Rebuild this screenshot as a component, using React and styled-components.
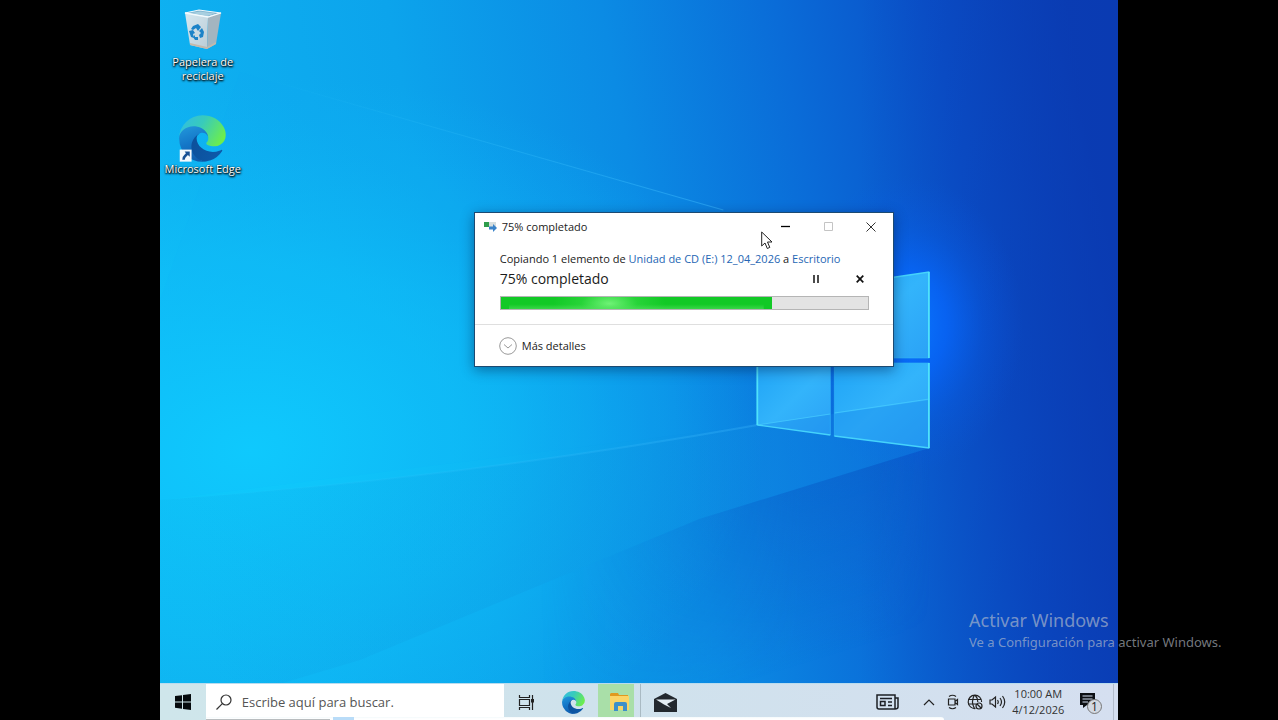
import React from "react";
import styled, { createGlobalStyle } from "styled-components";

const GlobalStyle = createGlobalStyle`
  *, *::before, *::after { box-sizing: border-box; }
  html, body, #root { height: 100%; }
  body {
    margin: 0;
    background: #000;
    overflow: hidden;
    font-family: "Open Sans", "Noto Sans", sans-serif;
    font-size: 11px;
    line-height: 14px;
    color: #1b1b1b;
  }
  button { font: inherit; color: inherit; padding: 0; border: 0; background: none; }
  svg { display: block; flex: none; }
`;

const Screen = styled.div`
  position: relative;
  display: grid;
  grid-template-columns: minmax(0, 1fr) minmax(0, 6fr) minmax(0, 1fr);
  height: 100%;
  min-height: 480px;
`;

const Desktop = styled.main`
  grid-column: 2;
  position: relative;
  display: flex;
  flex-direction: column;
  overflow: hidden;
  background: #0b8fe6;
`;

const Wallpaper = styled.svg`
  position: absolute;
  inset: 0;
  width: 100%;
  height: 100%;
`;

const Workspace = styled.section`
  position: relative;
  flex: 1;
  min-height: 0;
`;

const IconColumn = styled.div`
  display: flex;
  flex-direction: column;
  align-items: center;
  gap: 32px;
  width: 86px;
  padding-top: 7px;
`;

const Shortcut = styled.button`
  display: flex;
  flex-direction: column;
  align-items: center;
  width: 86px;
  color: #fff;
  text-shadow: 0 1px 2px #000, 1px 1px 2px #000, 0 0 1px rgba(0, 0, 0, 0.6);
`;

const Dialog = styled.section`
  position: absolute;
  top: 212px;
  left: 314px;
  width: 420px;
  background: #fff;
  border: 1px solid #1c4a72;
  box-shadow: 0 3px 12px rgba(0, 20, 60, 0.45);
`;

const TitleBar = styled.header`
  display: flex;
  align-items: center;
  height: 27px;
  padding-left: 9px;
`;

const Title = styled.h1`
  flex: 1;
  margin: 0 0 0 5px;
  font-size: 11px;
  font-weight: 400;
`;

const CaptionButton = styled.button`
  display: flex;
  align-items: center;
  justify-content: center;
  width: 43px;
  height: 27px;
`;

const DialogBody = styled.div`
  padding: 12px 24px 14px 25px;
  border-bottom: 1px solid #dfdfdf;
`;

const CopyLine = styled.p`
  margin: 0;
`;

const PathLink = styled.a`
  color: #2566b4;
  text-decoration: none;
`;

const StatusRow = styled.div`
  display: flex;
  align-items: center;
  height: 26px;
  margin-bottom: 4px;
`;

const StatusText = styled.span`
  flex: 1;
  font-size: 14px;
  line-height: 20px;
`;

const ActionButton = styled.button`
  display: flex;
  align-items: center;
  justify-content: center;
  width: 18px;
  height: 18px;
  margin-left: 26px;
`;

const Track = styled.div`
  height: 14px;
  background: #e3e3e3;
  border: 1px solid #b5b5b5;
`;

const Fill = styled.div`
  height: 100%;
  background:
    linear-gradient(rgba(18, 201, 38, 0) 60%, rgba(90, 225, 100, 0.55)) center / 94% 100% no-repeat,
    radial-gradient(ellipse 56px 24px at 40% 55%, #6ff276 0%, rgba(60, 222, 75, 0.5) 50%, rgba(17, 200, 37, 0) 100%),
    #12c926;
`;

const DialogFooter = styled.footer`
  display: flex;
  align-items: center;
  height: 41px;
  padding-left: 24px;
`;

const DetailsButton = styled.button`
  display: flex;
  align-items: center;
  gap: 5px;
`;

const Pointer = styled.svg`
  position: absolute;
  top: 231px;
  left: 601px;
`;

const Taskbar = styled.footer`
  position: relative;
  display: flex;
  height: 37px;
  padding-right: 4px;
  border-top: 1px solid #b9dcee;
  background: linear-gradient(90deg, #cfe6eb 0%, #cfe2ec 45%, #d5dff0 100%);
`;

const TaskButton = styled.button`
  display: flex;
  align-items: center;
  justify-content: ${(p) => (p.$active ? "flex-end" : "center")};
  width: ${(p) => p.$width}px;
  && { padding-right: ${(p) => (p.$active ? 4 : 0)}px; }
  background: ${(p) => (p.$active ? "#a9dfa8" : "none")};
`;

const Search = styled.label`
  display: flex;
  align-items: center;
  gap: 10px;
  width: 298px;
  padding-left: 10px;
  background: #fff;
`;

const SearchInput = styled.input`
  flex: 1;
  min-width: 0;
  padding: 0;
  border: 0;
  outline: 0;
  background: none;
  font: 400 13px/20px "Open Sans", "Noto Sans", sans-serif;
  color: #555;
  &::placeholder { color: #555; opacity: 1; }
`;

const Divider = styled.i`
  width: 1px;
  margin: 0 5px 0 6px;
  background: #a9bac3;
`;

const Tray = styled.div`
  display: flex;
  margin-left: auto;
`;

const Clock = styled.time`
  display: flex;
  flex-direction: column;
  justify-content: center;
  width: 65px;
  padding-left: 5px;
  text-align: center;
  line-height: 16px;
  color: #333;
`;

const EdgeLine = styled.i`
  width: 1px;
  background: #b3bdcc;
`;

const PlayerStrip = styled.div`
  position: absolute;
  left: 46px;
  bottom: 0;
  width: 77%;
  height: 3px;
  display: flex;
  gap: 3px;
  background: linear-gradient(#f3f9fb, #fff 60%);
  border-top-right-radius: 3px;
`;

const StripLine = styled.i`
  width: 124px;
  border-bottom: 1px solid #b9bdbf;
`;

const StripMark = styled.i`
  width: 21px;
  background: #b9dcf8;
`;

const Watermark = styled.aside`
  position: absolute;
  right: 51px;
  bottom: 68px;
  width: 258px;
  color: rgba(190, 195, 205, 0.62);
  white-space: nowrap;
  font-family: "Noto Sans", "Open Sans", sans-serif;
  font-size: 13px;
  line-height: 20px;
  p { margin: 0; }
`;

const WatermarkTitle = styled.p`
  font-size: 18px;
  line-height: 24px;
`;

function Background() {
  return (
    <Wallpaper viewBox="0 0 958 720" preserveAspectRatio="none" aria-hidden="true">
      <defs>
        <linearGradient id="base" gradientUnits="userSpaceOnUse" x1="0" y1="360" x2="940" y2="190">
          <stop offset="0" stopColor="#0fb4f2" />
          <stop offset="0.3" stopColor="#0ca4ec" />
          <stop offset="0.52" stopColor="#0b8be4" />
          <stop offset="0.7" stopColor="#0a6cd8" />
          <stop offset="0.86" stopColor="#0a50c8" />
          <stop offset="1" stopColor="#0a40b6" />
        </linearGradient>
        <radialGradient id="cyan" gradientUnits="userSpaceOnUse" cx="0" cy="0" r="1" gradientTransform="translate(90 450) rotate(-8) scale(520 370)">
          <stop offset="0" stopColor="#0fcbfd" />
          <stop offset="0.5" stopColor="#0fc6fb" stopOpacity="0.55" />
          <stop offset="1" stopColor="#0fb8f5" stopOpacity="0" />
        </radialGradient>
        <linearGradient id="dusk" gradientUnits="userSpaceOnUse" x1="700" y1="0" x2="958" y2="0">
          <stop offset="0" stopColor="#0a38b0" stopOpacity="0" />
          <stop offset="1" stopColor="#0a38b0" stopOpacity="0.65" />
        </linearGradient>
        <radialGradient id="glow" gradientUnits="userSpaceOnUse" cx="0" cy="0" r="1" gradientTransform="translate(745 325) scale(118 150)">
          <stop offset="0" stopColor="#0a78ff" />
          <stop offset="0.35" stopColor="#0768ff" stopOpacity="0.75" />
          <stop offset="0.65" stopColor="#0762f2" stopOpacity="0.3" />
          <stop offset="1" stopColor="#0a5ae0" stopOpacity="0" />
        </radialGradient>
        <linearGradient id="beam" x1="0" y1="0" x2="1" y2="0">
          <stop offset="0" stopColor="#3bd0ff" stopOpacity="0" />
          <stop offset="1" stopColor="#40bcff" stopOpacity="0.5" />
        </linearGradient>
        <linearGradient id="floor" gradientUnits="userSpaceOnUse" x1="0" y1="0" x2="770" y2="0">
          <stop offset="0" stopColor="#0c96da" stopOpacity="0.1" />
          <stop offset="0.65" stopColor="#0c8ada" stopOpacity="0.2" />
          <stop offset="0.8" stopColor="#1090e6" stopOpacity="0.35" />
          <stop offset="1" stopColor="#0f86e6" stopOpacity="0.45" />
        </linearGradient>
        <linearGradient id="shade" gradientUnits="userSpaceOnUse" x1="650" y1="485" x2="700" y2="647">
          <stop offset="0" stopColor="#0a5cc4" stopOpacity="0.35" />
          <stop offset="1" stopColor="#0a5cc4" stopOpacity="0" />
        </linearGradient>
        <linearGradient id="shadeFade" gradientUnits="userSpaceOnUse" x1="380" y1="0" x2="900" y2="0">
          <stop offset="0" stopColor="#000" />
          <stop offset="0.5" stopColor="#fff" />
          <stop offset="0.65" stopColor="#fff" />
          <stop offset="0.75" stopColor="#000" />
          <stop offset="1" stopColor="#000" />
        </linearGradient>
        <mask id="shadeMask" maskUnits="userSpaceOnUse" x="0" y="0" width="958" height="720">
          <rect width="958" height="720" fill="url(#shadeFade)" />
        </mask>
        <linearGradient id="pane" x1="0" y1="0" x2="1" y2="1">
          <stop offset="0" stopColor="#1fa4f6" />
          <stop offset="0.5" stopColor="#33b4fb" />
          <stop offset="1" stopColor="#2ba2f6" />
        </linearGradient>
      </defs>
      <rect width="958" height="720" fill="url(#base)" />
      <rect width="958" height="720" fill="url(#cyan)" />
      <rect width="958" height="720" fill="url(#dusk)" />
      <path d="M80 72 563 210 597 220V425L0 500V300Z" fill="#12a9ff" opacity="0.06" />
      <rect width="958" height="720" fill="url(#glow)" />
      <path d="M0 500Q300 478 597 425L769 448 539 519 200 660 0 720Z" fill="url(#floor)" />
      <path d="M769 448 539 519 200 660V720H958V448Z" fill="url(#shade)" mask="url(#shadeMask)" />
      <path d="M80 72 563 210" stroke="url(#beam)" strokeWidth="1" />
      <path d="M0 500Q300 478 597 425" fill="none" stroke="url(#beam)" strokeWidth="2" opacity="0.6" />
      <path d="M597 298 670 287V358H597Z" fill="url(#pane)" />
      <path d="M674 286 769 272V358H674Z" fill="url(#pane)" />
      <path d="M597 363H670V435L597 425Z" fill="url(#pane)" />
      <path d="M674 363H769V448L674 436Z" fill="url(#pane)" />
      <path d="M597 425 769 400V448L674 436 670 435Z" fill="#1584e8" opacity="0.35" />
      <path d="M597 425 670 414M674 413 769 399" stroke="#4ad0ff" opacity="0.65" fill="none" />
      <path d="M670 363V435M674 363V436M674 363H769M674 358H769" fill="none" stroke="#33b9f6" opacity="0.6" />
      <path d="M597 425 670 435M674 436 769 448M769 272 674 286" fill="none" stroke="#45d3fb" strokeWidth="1.400" />
      <path d="M768.500 272V358M768.500 363V448M597 363V425" stroke="#4fe2fb" strokeWidth="1.800" />
    </Wallpaper>
  );
}

function RecycleBin() {
  return (
    <svg width="44" height="48" viewBox="0 0 44 48" aria-hidden="true">
      <defs>
        <linearGradient id="binFront" x1="0" y1="0" x2="1" y2="1">
          <stop offset="0" stopColor="#d5e8f1" />
          <stop offset="1" stopColor="#bccdd6" />
        </linearGradient>
      </defs>
      <path d="M4 6 18 3 40 6 27 10Z" fill="#7fb3ce" stroke="#eef8fc" strokeWidth="1.200" />
      <path d="M10 6 19 4.500 34 6.500 26 9Z" fill="#a8cfe0" />
      <path d="M4 6 27 10 26 42 9 38Z" fill="url(#binFront)" />
      <path d="M27 10 40 6 35 37 26 42Z" fill="#a3b5c0" />
      <path d="M4 6 27 10 40 6" fill="none" stroke="#f2fafd" strokeWidth="1.300" />
      <path d="M9 36 26 40 35 35 35 37 26 42 9 38Z" fill="#c3b9ac" />
      <g fill="#1b83c8">
        <path d="M12 19 17 17 20 20 17 24 15 21 12 23 10 22Z" />
        <path d="M8 24 12 23 14 26 12 27 13 31 10 30Z" />
        <path d="M21 21 23 25 22 30 19 31 18 28 20 26 18 24Z" />
        <path d="M14 28 14 30 17 30 17 33 14 33 12 30Z" />
      </g>
    </svg>
  );
}

function EdgeLogo({ size, id, arrow }) {
  return (
    <svg width={size} height={size} viewBox="4 4 258 258" aria-hidden="true">
      <defs>
        <linearGradient id={id + "a"} x1="0" y1="0" x2="1" y2="0.3">
          <stop offset="0" stopColor="#0c4f9a" />
          <stop offset="1" stopColor="#0d59a8" />
        </linearGradient>
        <linearGradient id={id + "b"} x1="0.2" y1="0" x2="0.5" y2="1">
          <stop offset="0" stopColor="#2399dc" />
          <stop offset="0.5" stopColor="#1477c8" />
          <stop offset="1" stopColor="#0f5cad" />
        </linearGradient>
        <linearGradient id={id + "c"} x1="0" y1="0.2" x2="1" y2="0.6">
          <stop offset="0" stopColor="#31bde2" />
          <stop offset="0.45" stopColor="#38cbbb" />
          <stop offset="1" stopColor="#6dee4c" />
        </linearGradient>
      </defs>
      <path fill={`url(#${id}a)`} d="M235.700 195.500a93.700 93.700 0 0 1-10.500 4.700 101.900 101.900 0 0 1-35.900 6.400c-47.300 0-88.600-32.500-88.600-74.300A31.500 31.500 0 0 1 117.100 105c-42.800 1.800-53.800 46.400-53.800 72.500 0 73.900 68.100 81.400 82.800 81.400 7.900 0 19.800-2.300 27-4.600l1.300-.4a128.300 128.300 0 0 0 66.600-52.800 4 4 0 0 0-5.300-5.600z" />
      <path fill={`url(#${id}b)`} d="M110.300 246.300A79.200 79.200 0 0 1 87.600 225a80.700 80.700 0 0 1 29.500-120c3.100-1.500 8.500-4.100 15.600-4a32.400 32.400 0 0 1 25.700 13 31.900 31.900 0 0 1 6.300 18.700c0-.2 24.500-79.600-80-79.600-43.900 0-80 41.600-80 78.200a130.200 130.200 0 0 0 12.100 56 128 128 0 0 0 156.400 67.100 75.600 75.600 0 0 1-62.800-8z" />
      <path fill={`url(#${id}c)`} d="M156.900 153.800c-.8 1-3.300 2.500-3.300 5.700 0 2.600 1.700 5.100 4.700 7.200 14.400 10 41.500 8.700 41.600 8.700a59.600 59.600 0 0 0 30.300-8.400 61.400 61.400 0 0 0 30.400-52.900c.3-22.400-8-37.300-11.300-43.900C228.100 28.800 182.400 5 132.600 5a128 128 0 0 0-128 126.200c.5-36.500 36.800-66 80-66 3.500 0 23.500.3 42 10 16.300 8.600 24.900 19 30.900 29.200 6.200 10.700 7.300 24.200 7.300 29.600s-2.800 13.300-7.900 19.800z" />
      {arrow && (
        <g>
          <path d="M8 194H73V260H8Z" fill="#f4f8fc" />
          <path d="M35 205H63V233L53 223 41 236Q36 242 36 250H22Q21 232 33 223L42 214Z" fill="#174f94" />
        </g>
      )}
    </svg>
  );
}

const line = { fill: "none", stroke: "#222", strokeWidth: 1.2 };

function Tasks() {
  return (
    <Taskbar>
      <TaskButton $width={46} aria-label="Inicio">
        <svg width="16" height="16" viewBox="0 0 16 16" fill="#050a0d">
          <path d="M0 2 7 1.200V7.500H0ZM8 1 16 0V7.500H8ZM0 8.500H7V14.700L0 13.800ZM8 8.500H16V16L8 14.900Z" />
        </svg>
      </TaskButton>
      <Search>
        <svg width="16" height="16" viewBox="0 0 16 16" fill="none" stroke="#333" strokeWidth="1.200">
          <circle cx="10" cy="6" r="5" />
          <path d="M6.300 9.700 0.500 15.500" />
        </svg>
        <SearchInput aria-label="Buscar" placeholder="Escribe aquí para buscar." />
      </Search>
      <TaskButton $width={46} aria-label="Vista de tareas">
        <svg width="17" height="15" viewBox="0 0 17 15" {...line}>
          <path d="M1.500 0V2.500H11.500V0M1.500 15V12.500H11.500V15M1.500 4.500H11.500V10.500H1.500ZM14.500 0V15" />
          <path d="M13 4H16V7.500H13Z" fill="#222" stroke="none" />
        </svg>
      </TaskButton>
      <TaskButton $width={48} aria-label="Microsoft Edge">
        <EdgeLogo size={23} id="tb" />
      </TaskButton>
      <TaskButton $width={36} $active aria-label="Explorador de archivos">
        <svg width="21" height="20" viewBox="0 0 21 20">
          <path d="M1 2 2 1H9L10 3H19V6H1Z" fill="#e0991f" />
          <path d="M1 4H20V18H1Z" fill="#fbd466" />
          <path d="M5 18V12Q5 10 7 10H16Q18 10 18 12V19H14V14H9V19H5Z" fill="#3f8fc9" />
        </svg>
      </TaskButton>
      <Divider />
      <TaskButton $width={40} aria-label="Correo">
        <svg width="23" height="19" viewBox="0 0 23 19">
          <path d="M0 6 11.500 0 23 6V19H0Z" fill="#22282e" />
          <path d="M2 6.500H21.500L13 11 17 15 10 11.500Z" fill="#e3edf3" />
        </svg>
      </TaskButton>
      <Tray>
        <TaskButton $width={46} aria-label="Noticias">
          <svg width="23" height="16" viewBox="0 0 23 16" fill="none" stroke="#1c1f25" strokeWidth="1.500">
            <path d="M1 1H19V15H3Q1 15 1 13ZM19 4H22V13Q22 15 19 15M4 4.500H16M12 8H16M12 11.500H16M4.500 7.500H9V11.500H4.500Z" />
          </svg>
        </TaskButton>
        <TaskButton $width={37} aria-label="Mostrar iconos ocultos">
          <svg width="12" height="7" viewBox="0 0 12 7" {...line}>
            <path d="M1 6 6 1 11 6" />
          </svg>
        </TaskButton>
        <TaskButton $width={11} aria-label="Reunirse ahora">
          <svg width="12" height="16" viewBox="0 0 12 16" {...line}>
            <path d="M2 2.500Q5.500 0 9 2.500M2 13.500Q5.500 16 9 13.500M1.500 5H8V11H1.500ZM8 7.500 10.500 5.500V10.500L8 8.500" />
          </svg>
        </TaskButton>
        <TaskButton $width={33} aria-label="Red sin conexión">
          <svg width="16" height="16" viewBox="0 0 16 16" {...line}>
            <path d="M8.500 14.500A6.700 6.700 0 1 1 14.600 8M1 5.500H14M1 10H9M7.500 1Q3.500 7.500 7.500 14.500M8 1Q10.800 4 10.800 8" />
            <circle cx="12" cy="12" r="3" />
            <path d="M10 10 14 14" />
          </svg>
        </TaskButton>
        <TaskButton $width={12} aria-label="Volumen">
          <svg width="17" height="14" viewBox="0 0 17 14" {...line}>
            <path d="M1 5H3L6.500 2V12L3 9H1ZM8.500 5Q10 7 8.500 9M11 3Q14 7 11 11M13.500 1Q18 7 13.500 13" />
          </svg>
        </TaskButton>
        <Clock>
          <span>10:00 AM</span>
          <span>4/12/2026</span>
        </Clock>
        <TaskButton $width={45} aria-label="Notificaciones">
          <svg width="25" height="24" viewBox="0 0 25 24">
            <path d="M2 3H17V15H9L5 18V15H2Z" fill="#0d1014" />
            <path d="M4.500 6H14.500M4.500 9H14.500M4.500 12H10" stroke="#d5dff0" />
            <circle cx="16.500" cy="16.500" r="7" fill="#d3d9e2" stroke="#777" />
            <text x="16.500" y="21" textAnchor="middle" fontSize="12" fill="#222">1</text>
          </svg>
        </TaskButton>
        <EdgeLine />
      </Tray>
      <PlayerStrip><StripLine /><StripMark /></PlayerStrip>
    </Taskbar>
  );
}

function CopyDialog() {
  return (
    <Dialog aria-label="75% completado">
      <TitleBar>
        <svg width="13" height="11" viewBox="0 0 13 11" aria-hidden="true">
          <path d="M0 1H12V6H0Z" fill="#d7dede" />
          <path d="M0 1H5V6H0Z" fill="#2f9d4c" />
          <path d="M5 5.500H9V3L13 7 9 11V8.500H5Z" fill="#3a83c9" />
        </svg>
        <Title>75% completado</Title>
        <CaptionButton aria-label="Minimizar">
          <svg width="9" height="9" viewBox="0 0 9 9"><path d="M0 4.500H9" stroke="#000" strokeWidth="1.300" /></svg>
        </CaptionButton>
        <CaptionButton aria-label="Maximizar" disabled>
          <svg width="9" height="9" viewBox="0 0 9 9"><path d="M.5 .5H8.500V8.500H.5Z" fill="none" stroke="#c4c4c4" /></svg>
        </CaptionButton>
        <CaptionButton aria-label="Cerrar">
          <svg width="10" height="10" viewBox="0 0 10 10"><path d="M.5 .5 9.500 9.500M9.500 .5 .5 9.500" stroke="#333" /></svg>
        </CaptionButton>
      </TitleBar>
      <DialogBody>
        <CopyLine>
          Copiando 1 elemento de <PathLink href="#origen">Unidad de CD (E:) 12_04_2026</PathLink> a{" "}
          <PathLink href="#destino">Escritorio</PathLink>
        </CopyLine>
        <StatusRow>
          <StatusText>75% completado</StatusText>
          <ActionButton aria-label="Pausar">
            <svg width="6" height="8" viewBox="0 0 6 8"><path d="M1 0V8M5 0V8" stroke="#111" strokeWidth="1.500" /></svg>
          </ActionButton>
          <ActionButton aria-label="Cancelar">
            <svg width="8" height="8" viewBox="0 0 8 8"><path d="M.7 .7 7.300 7.300M7.300 .7 .7 7.300" stroke="#111" strokeWidth="1.700" /></svg>
          </ActionButton>
        </StatusRow>
        <Track role="progressbar" aria-valuenow={75} aria-valuemin={0} aria-valuemax={100} aria-label="Progreso de la copia">
          <Fill style={{ width: "74%" }} />
        </Track>
      </DialogBody>
      <DialogFooter>
        <DetailsButton>
          <svg width="18" height="18" viewBox="0 0 18 18" fill="none" stroke="#999" aria-hidden="true">
            <circle cx="9" cy="9" r="8.300" />
            <path d="M5 7.500 9 11 13 7.500" />
          </svg>
          Más detalles
        </DetailsButton>
      </DialogFooter>
    </Dialog>
  );
}

export default function App() {
  return (
    <>
      <GlobalStyle />
      <Screen>
        <Desktop>
          <Background />
          <Workspace>
            <IconColumn>
              <Shortcut>
                <RecycleBin />
                Papelera de reciclaje
              </Shortcut>
              <Shortcut>
                <EdgeLogo size={47} id="dk" arrow />
                Microsoft Edge
              </Shortcut>
            </IconColumn>
            <CopyDialog />
            <Pointer width="12" height="19" viewBox="0 0 12 19" aria-hidden="true">
              <path d="M.7 1V15L4 12 6.300 17.500 8.800 16.400 6.500 11H11Z" fill="#fff" stroke="#222" />
            </Pointer>
          </Workspace>
          <Tasks />
        </Desktop>
        <Watermark>
          <WatermarkTitle>Activar Windows</WatermarkTitle>
          <p>Ve a Configuración para activar Windows.</p>
        </Watermark>
      </Screen>
    </>
  );
}
